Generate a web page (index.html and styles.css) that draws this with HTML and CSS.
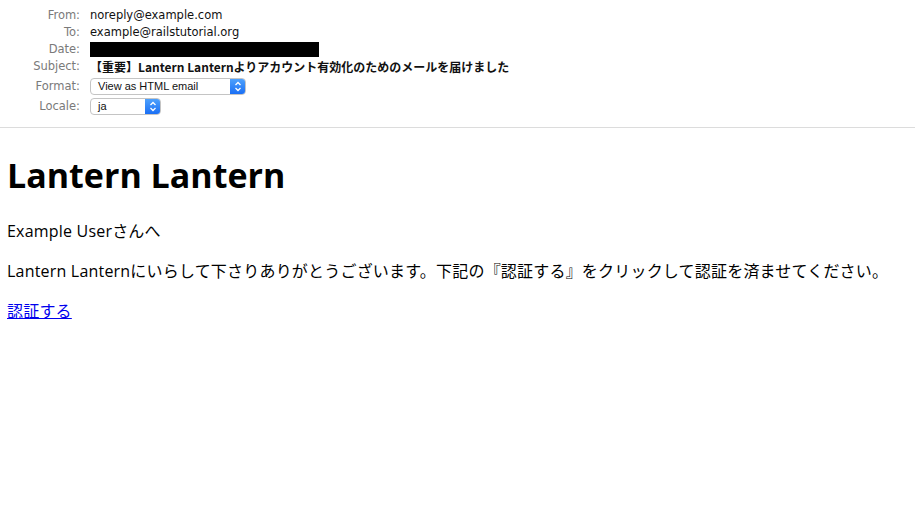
FILE: index.html
```html
<!DOCTYPE html>
<html>
<head>
<meta charset="utf-8">
<link rel="stylesheet" href="styles.css">
</head>
<body>
<header class="headers">
  <dl class="fields">
    <dt>From:</dt><dd>noreply@example.com</dd>
    <dt>To:</dt><dd>example@railstutorial.org</dd>
    <dt>Date:</dt><dd><span class="redact"></span></dd>
    <dt>Subject:</dt><dd><strong class="subject">【重要】Lantern Lanternよりアカウント有効化のためのメールを届けました</strong></dd>
    <dt class="ctl">Format:</dt><dd class="ctl"><span class="select select-format"><span class="sel-text">View as HTML email</span><span class="arrows"><svg width="8" height="11" viewBox="0 0 8 11"><path d="M1.5 4 L4 1.5 L6.5 4 M1.5 7 L4 9.5 L6.5 7" fill="none" stroke="#fff" stroke-width="1.3"/></svg></span></span></dd>
    <dt class="ctl">Locale:</dt><dd class="ctl"><span class="select select-locale"><span class="sel-text">ja</span><span class="arrows"><svg width="8" height="11" viewBox="0 0 8 11"><path d="M1.5 4 L4 1.5 L6.5 4 M1.5 7 L4 9.5 L6.5 7" fill="none" stroke="#fff" stroke-width="1.3"/></svg></span></span></dd>
  </dl>
</header>
<main class="mail">
  <h1>Lantern Lantern</h1>
  <p>Example Userさんへ</p>
  <p>Lantern Lanternにいらして下さりありがとうございます。下記の『認証する』をクリックして認証を済ませてください。</p>
  <p><a href="#">認証する</a></p>
</main>
</body>
</html>
```
FILE: styles.css
```css
html, body {
  margin: 0;
  padding: 0;
  background: #fff;
}
body {
  font-family: "Open Sans", "Noto Sans CJK JP", sans-serif;
  color: #000;
}
.headers {
  border-bottom: 1px solid #dcdcdc;
  padding: 7px 0 12px 0;
}
.fields {
  margin: 0;
  display: grid;
  grid-template-columns: 80px 1fr;
  grid-template-rows: repeat(4, 17px) 20px 20px;
  column-gap: 10px;
  font-family: "DejaVu Sans", "Noto Sans CJK JP", sans-serif;
  font-size: 11.5px;
  line-height: 17px;
}
.fields dt {
  text-align: right;
  color: #7a7a7a;
  align-self: end;
  height: 17px;
}
.fields dd {
  margin: 0;
  color: #111;
  height: 17px;
  align-self: end;
  display: flex;
  align-items: center;
}
.redact {
  display: block;
  width: 229px;
  height: 15px;
  background: #000;
}
.subject {
  font-family: "Noto Sans CJK JP", sans-serif;
  font-size: 12px;
  font-weight: bold;
  line-height: 17px;
}
.select {
  display: flex;
  align-items: stretch;
  height: 17px;
  box-sizing: border-box;
  border: 1px solid #c4c4c4;
  border-radius: 4px;
  background: #fff;
  overflow: hidden;
  font-family: "Liberation Sans", sans-serif;
  font-size: 11px;
  line-height: 15px;
}
.select-format { width: 156px; }
.select-locale { width: 71px; }
.sel-text {
  flex: 1;
  padding-left: 7px;
}
.arrows {
  width: 15px;
  background: linear-gradient(#4ea1fc, #1a6ff5);
  display: flex;
  align-items: center;
  justify-content: center;
}
.mail {
  padding: 0 7px;
  font-size: 16px;
}
.mail h1 {
  font-size: 34px;
  font-weight: 700;
  margin: 23px 0 20px;
  line-height: 48px;
}
.mail p {
  margin: 0 0 16px;
  line-height: 24px;
  letter-spacing: 0.2px;
}
.mail a {
  color: #0000ee;
}
```
